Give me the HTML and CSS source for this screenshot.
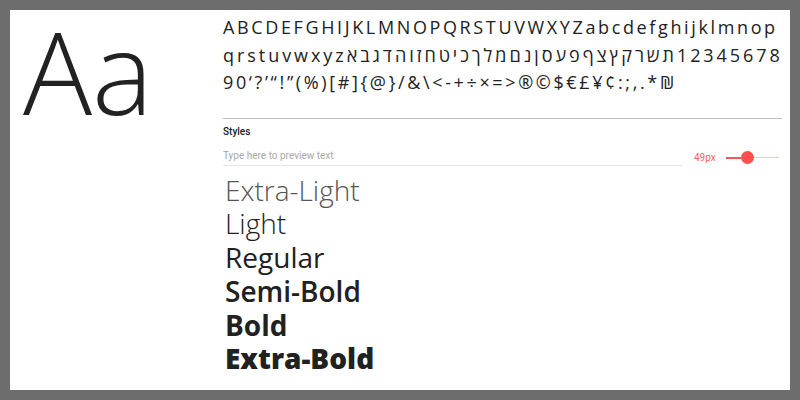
FILE: index.html
```html
<!DOCTYPE html>
<html lang="en">
<head>
<meta charset="utf-8">
<title>Font specimen</title>
<link rel="stylesheet" href="styles.css">
</head>
<body>
<main class="panel">
  <div class="hero">Aa</div>
  <section class="details">
    <div class="glyphs">
      <div class="glyph-row">ABCDEFGHIJKLMNOPQRSTUVWXYZabcdefghijklmnop</div>
      <div class="glyph-row glyph-row-mixed"><bdo dir="ltr">qrstuvwxyzאבגדהוזחטיכךלמםנןסעפףצץקרשת12345678</bdo></div>
      <div class="glyph-row">90‘?’“!”(%)[#]{@}/&amp;\&lt;-+÷×=&gt;®©$€£¥¢:;,.*₪</div>
    </div>
    <hr class="divider">
    <h2 class="label">Styles</h2>
    <div class="controls">
      <input class="preview-input" type="text" placeholder="Type here to preview text">
      <span class="size-value">49px</span>
      <div class="slider">
        <div class="slider-active"></div>
        <div class="slider-thumb"></div>
        <div class="slider-rest"></div>
      </div>
    </div>
    <ul class="styles">
      <li class="w200">Extra-Light</li>
      <li class="w300">Light</li>
      <li class="w400">Regular</li>
      <li class="w600">Semi-Bold</li>
      <li class="w700">Bold</li>
      <li class="w800">Extra-Bold</li>
    </ul>
  </section>
</main>
</body>
</html>
```
FILE: styles.css
```css
html, body {
  margin: 0;
  padding: 0;
}
body {
  background: #6d6d6d;
  padding: 10px;
  width: 800px;
  height: 400px;
  box-sizing: border-box;
  overflow: hidden;
}
.panel {
  background: #ffffff;
  height: 380px;
  display: grid;
  grid-template-columns: 213px 1fr;
  padding-right: 8px;
  box-sizing: border-box;
  font-family: "Open Sans", "Liberation Sans", sans-serif;
  color: #212121;
}
.hero {
  padding-left: 13px;
  font-size: 115px;
  font-weight: 300;
  line-height: 116px;
  margin-top: 3px;
  color: #222;
}
.details {
  display: flex;
  flex-direction: column;
  min-width: 0;
}
.glyphs {
  padding-top: 4px;
  font-size: 18px;
  line-height: 27.5px;
  letter-spacing: 2.63px;
  color: #222;
  white-space: nowrap;
}
.glyph-row-mixed {
  letter-spacing: 2.95px;
}
.divider {
  border: 0;
  border-top: 1px solid #bdbdbd;
  margin: 21px 0 0 0;
  height: 0;
}
.label {
  font-family: Roboto, "Liberation Sans", sans-serif;
  font-size: 10px;
  font-weight: 500;
  line-height: 12px;
  margin: 7px 0 0 0;
  color: #212121;
}
.controls {
  display: flex;
  align-items: center;
  margin-top: 12px;
}
.preview-input {
  width: 460px;
  border: 0;
  border-bottom: 1px solid #e6e6e6;
  padding: 0 0 3px 0;
  margin: 0;
  font-family: Roboto, "Liberation Sans", sans-serif;
  font-size: 10px;
  line-height: 12px;
  color: #212121;
  outline: none;
  background: transparent;
}
.preview-input::placeholder {
  color: #a8a8a8;
}
.size-value {
  font-family: Roboto, "Liberation Sans", sans-serif;
  font-size: 10px;
  color: #ff6060;
  margin-left: 11px;
  width: 32px;
}
.slider {
  display: flex;
  align-items: center;
  width: 53px;
  height: 13px;
}
.slider-active {
  width: 15px;
  height: 2px;
  background: #ff5252;
}
.slider-thumb {
  width: 13px;
  height: 13px;
  border-radius: 50%;
  background: #ff4f4f;
  flex: none;
}
.slider-rest {
  flex: 1;
  height: 1px;
  background: #ffc4c4;
}
.styles {
  list-style: none;
  margin: 8px 0 0 2px;
  padding: 0;
  font-size: 28px;
  line-height: 33.8px;
  color: #212121;
}
.w200 { font-weight: 200; color: #555; }
.w300 { font-weight: 300; }
.w400 { font-weight: 400; }
.w600 { font-weight: 570; }
.w700 { font-weight: 700; }
.w800 { font-weight: 800; }
```
